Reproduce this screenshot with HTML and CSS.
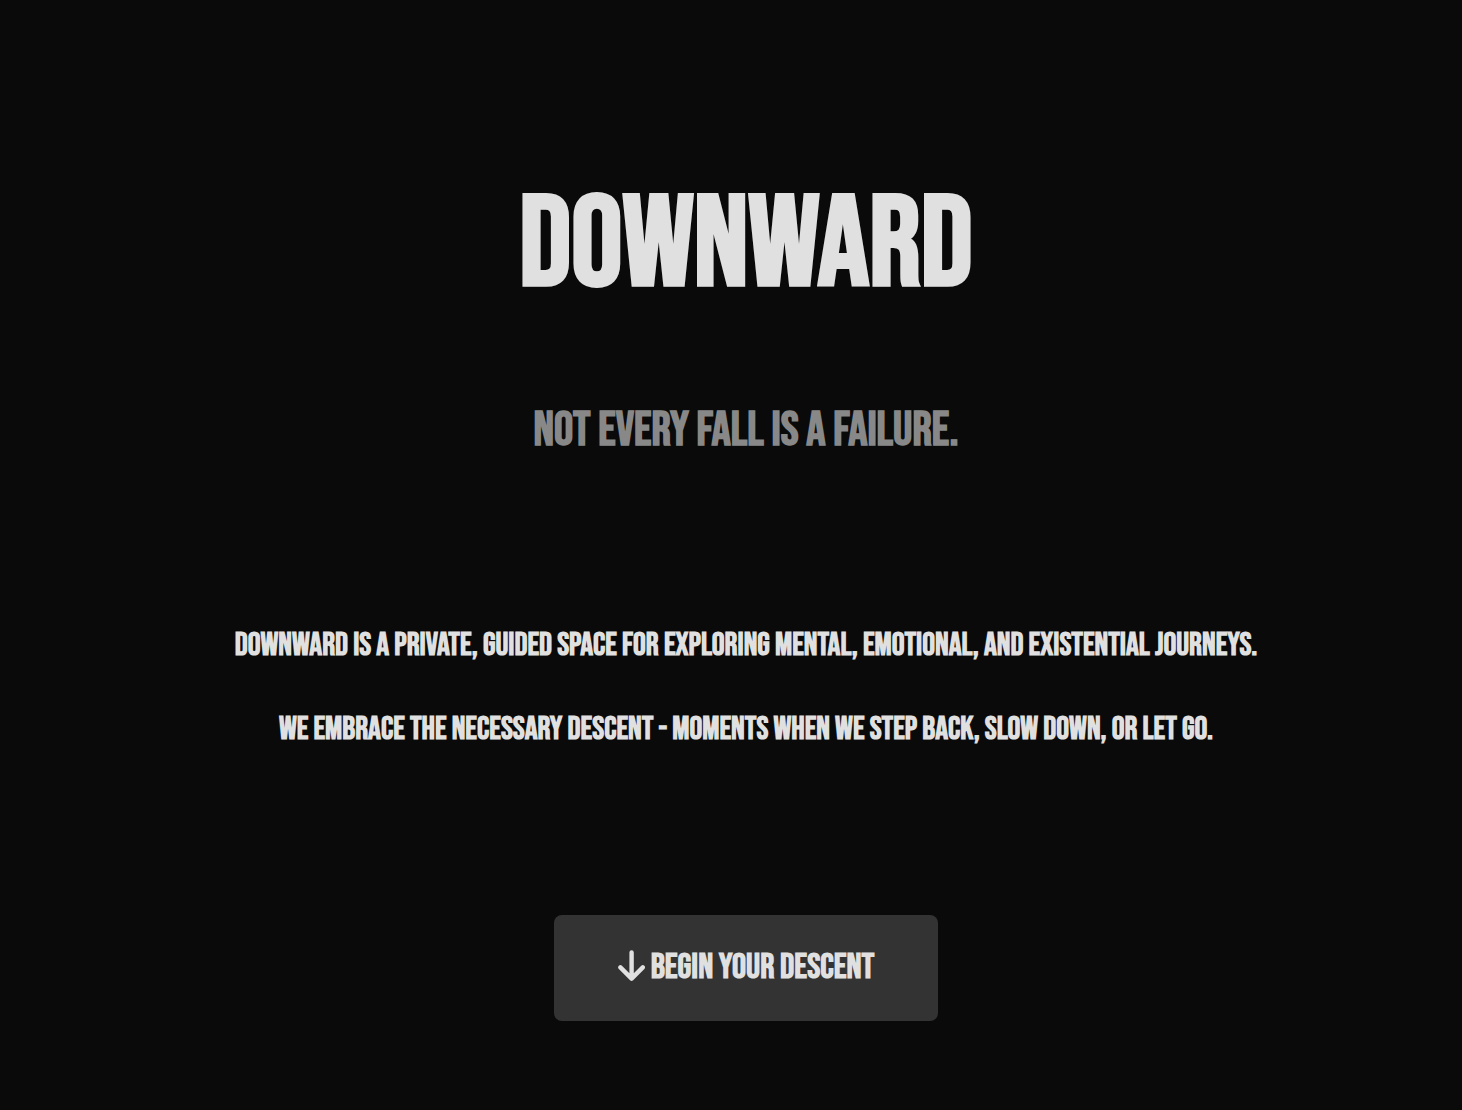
FILE: index.html
```html
<!DOCTYPE html>
<html lang="en">
<head>
<meta charset="utf-8">
<title>Downward</title>
<link rel="stylesheet" href="styles.css">
</head>
<body>
<main class="hero">
  <h1 class="title">DOWNWARD</h1>
  <p class="tagline">Not every fall is a failure.</p>
  <section class="about">
    <p class="about-line">Downward is a private, guided space for exploring mental, emotional, and existential journeys.</p>
    <p class="about-line">We embrace the necessary descent - moments when we step back, slow down, or let go.</p>
  </section>
  <button class="cta" type="button">
    <svg class="cta-icon" width="27" height="31" viewBox="0 0 27 31" aria-hidden="true">
      <path d="M13.6 2.4 V28.6 M2.4 17.4 L13.6 28.6 L24.8 17.4" fill="none" stroke="currentColor" stroke-width="4.4" stroke-linecap="round" stroke-linejoin="round"/>
    </svg>
    <span class="cta-label">Begin your descent</span>
  </button>
</main>
</body>
</html>
```
FILE: styles.css
```css
html, body {
  margin: 0;
  padding: 0;
  background: #0a0a0a;
}
body {
  font-family: "Bebas Neue", "Oswald", "Roboto Condensed", sans-serif;
  font-weight: 700;
  color: #e0e0e0;
  text-transform: uppercase;
}
.hero {
  display: flex;
  flex-direction: column;
  align-items: center;
  text-align: center;
  padding: 183px 0 0 30px;
}
.title {
  margin: 0;
  font-size: 128px;
  font-weight: 700;
  line-height: 1;
  color: #e0e0e0;
}
.tagline {
  margin: 96px 0 0;
  font-size: 48px;
  line-height: 1;
  color: #888888;
}
.about {
  margin-top: 175px;
  display: flex;
  flex-direction: column;
  gap: 52px;
}
.about-line {
  margin: 0;
  font-size: 32px;
  line-height: 1;
  color: #e0e0e0;
}
.cta {
  margin-top: 169px;
  display: flex;
  align-items: center;
  gap: 6px;
  padding: 0 64px;
  height: 106px;
  border: none;
  border-radius: 8px;
  background: #333333;
  color: #e0e0e0;
  font-family: inherit;
  font-weight: 700;
  font-size: 35.2px;
  line-height: 1;
  text-transform: uppercase;
  cursor: pointer;
}
.cta-icon {
  display: block;
  margin-bottom: 5px;
}
```
